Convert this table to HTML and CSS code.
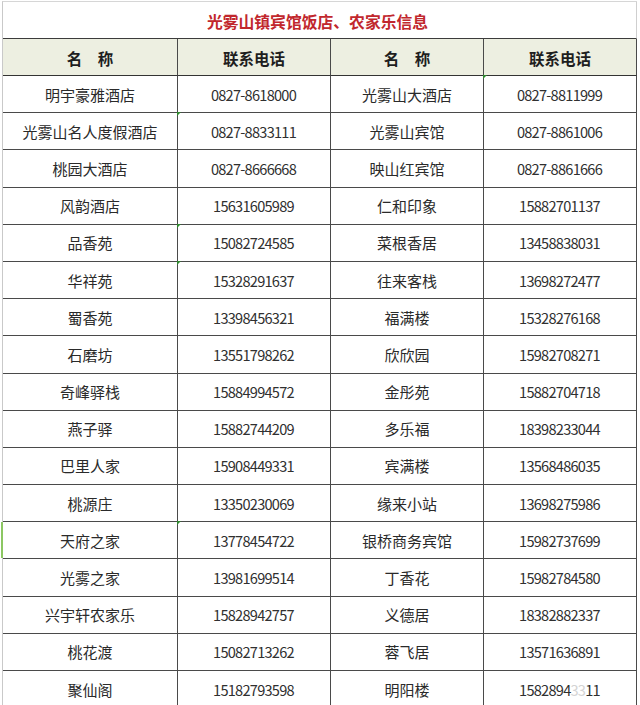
FILE: index.html
```html
<!DOCTYPE html>
<html lang="zh-CN">
<head>
<meta charset="utf-8">
<title>光雾山镇宾馆饭店、农家乐信息</title>
<link rel="stylesheet" href="styles.css">
</head>
<body>
<div class="sheet">
  <div class="title">光雾山镇宾馆饭店、农家乐信息</div>

  <div class="cell head c1">名　称</div>
  <div class="cell head">联系电话</div>
  <div class="cell head">名　称</div>
  <div class="cell head">联系电话</div>

  <div class="cell c1">明宇豪雅酒店</div><div class="cell num">0827-8618000</div><div class="cell">光雾山大酒店</div><div class="cell num mark">0827-8811999</div>
  <div class="cell c1">光雾山名人度假酒店</div><div class="cell num mark">0827-8833111</div><div class="cell">光雾山宾馆</div><div class="cell num">0827-8861006</div>
  <div class="cell c1">桃园大酒店</div><div class="cell num">0827-8666668</div><div class="cell">映山红宾馆</div><div class="cell num">0827-8861666</div>
  <div class="cell c1">风韵酒店</div><div class="cell num">15631605989</div><div class="cell">仁和印象</div><div class="cell num">15882701137</div>
  <div class="cell c1">品香苑</div><div class="cell num mark">15082724585</div><div class="cell">菜根香居</div><div class="cell num">13458838031</div>
  <div class="cell c1">华祥苑</div><div class="cell num mark">15328291637</div><div class="cell">往来客栈</div><div class="cell num">13698272477</div>
  <div class="cell c1">蜀香苑</div><div class="cell num">13398456321</div><div class="cell">福满楼</div><div class="cell num">15328276168</div>
  <div class="cell c1">石磨坊</div><div class="cell num">13551798262</div><div class="cell">欣欣园</div><div class="cell num">15982708271</div>
  <div class="cell c1">奇峰驿栈</div><div class="cell num">15884994572</div><div class="cell">金彤苑</div><div class="cell num">15882704718</div>
  <div class="cell c1">燕子驿</div><div class="cell num">15882744209</div><div class="cell">多乐福</div><div class="cell num">18398233044</div>
  <div class="cell c1">巴里人家</div><div class="cell num">15908449331</div><div class="cell">宾满楼</div><div class="cell num">13568486035</div>
  <div class="cell c1">桃源庄</div><div class="cell num">13350230069</div><div class="cell">缘来小站</div><div class="cell num">13698275986</div>
  <div class="cell c1 edge">天府之家</div><div class="cell num mark">13778454722</div><div class="cell">银桥商务宾馆</div><div class="cell num">15982737699</div>
  <div class="cell c1">光雾之家</div><div class="cell num">13981699514</div><div class="cell">丁香花</div><div class="cell num">15982784580</div>
  <div class="cell c1">兴宇轩农家乐</div><div class="cell num">15828942757</div><div class="cell">义德居</div><div class="cell num">18382882337</div>
  <div class="cell c1">桃花渡</div><div class="cell num">15082713262</div><div class="cell">蓉飞居</div><div class="cell num">13571636891</div>
  <div class="cell c1">聚仙阁</div><div class="cell num">15182793598</div><div class="cell">明阳楼</div><div class="cell num">1582894<span class="wm">33</span>11</div>
</div>
</body>
</html>
```

FILE: styles.css
```css
html, body {
  margin: 0;
  padding: 0;
  background: #ffffff;
}

body {
  padding: 1px 0 0 2px;
  font-family: "Noto Sans CJK SC", "Noto Sans", sans-serif;
  color: #2a2a2a;
  overflow: hidden;
}

.sheet {
  display: grid;
  grid-template-columns: 175px 153px 153px 153px;
  grid-template-rows: 37px 37px repeat(17, 37.2px);
  width: 634px;
  border-left: 1px solid #c9c9c9;
  border-top: 1px solid #d6d6d6;
}

.title {
  grid-column: 1 / span 4;
  box-sizing: border-box;
  border-right: 1px solid #cfcfcf;
  border-bottom: 1px solid #3c3c3c;
  display: flex;
  align-items: center;
  justify-content: center;
  padding: 2px 4px 0 0;
  font-size: 15.8px;
  font-weight: 700;
  color: #c1272d;
  letter-spacing: 0;
}

.cell {
  position: relative;
  box-sizing: border-box;
  border-right: 1px solid #4a4a4a;
  border-bottom: 1px solid #4a4a4a;
  display: flex;
  align-items: center;
  justify-content: center;
  font-size: 15px;
  white-space: nowrap;
}

.head {
  background: #edefe1;
  font-weight: 700;
  font-size: 15.5px;
  color: #1e1e1e;
  padding-top: 2px;
  border-bottom-color: #333333;
}

.num {
  font-size: 14.6px;
  letter-spacing: -0.75px;
  color: #303030;
  padding-right: 1px;
}

.wm {
  color: #d4d4d4;
}

.mark::before {
  content: "";
  position: absolute;
  left: -1px;
  top: -1px;
  width: 0;
  height: 0;
  border-top: 4px solid #2f8a2f;
  border-right: 4px solid transparent;
}

.edge::before {
  content: "";
  position: absolute;
  left: -2px;
  top: 0;
  bottom: 0;
  width: 2px;
  background: #8cc763;
}
```
